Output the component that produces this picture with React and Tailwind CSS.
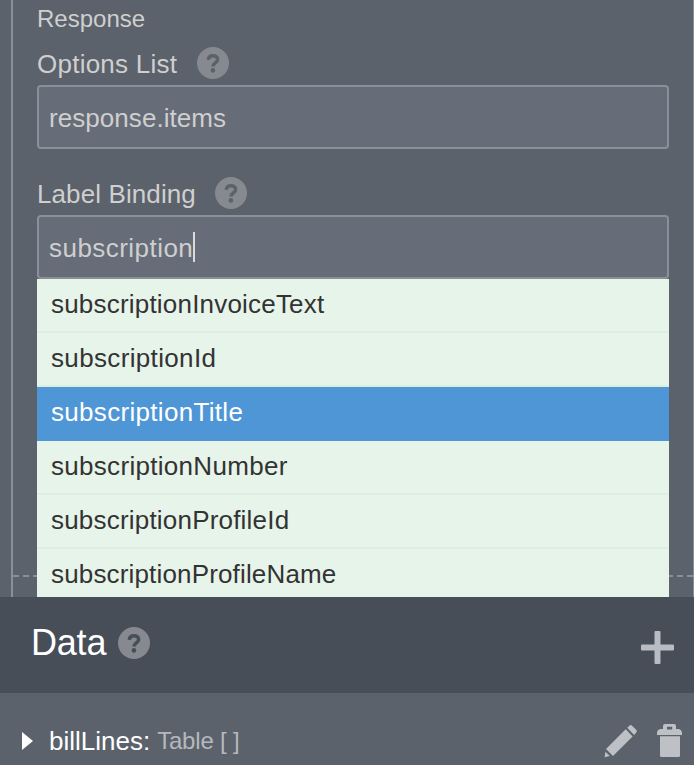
const options = [
  { name: "subscriptionInvoiceText", tracking: "tracking-[0.2px]" },
  { name: "subscriptionId", tracking: "tracking-[0.35px]" },
  { name: "subscriptionTitle", tracking: "tracking-[0.31px]", active: true },
  { name: "subscriptionNumber", tracking: "tracking-[0.3px]" },
  { name: "subscriptionProfileId", tracking: "tracking-[0.2px]" },
  { name: "subscriptionProfileName", tracking: "tracking-[0.16px]" },
];

function HelpIcon({ hole, className = "" }) {
  return (
    <svg className={`size-8 shrink-0 ${className}`} viewBox="0 0 32 32" fill="none">
      <circle cx="16" cy="16" r="16" fill="#868a90" />
      <path
        d="M11.300 12.900C11.500 10.100 13.400 8.700 15.900 8.700c2.700 0 4.700 1.400 4.700 3.700 0 3.600-4.600 3.400-4.600 7.200"
        stroke={hole}
        strokeWidth="3.500"
      />
      <circle cx="15.900" cy="23.400" r="2.300" fill={hole} />
    </svg>
  );
}

function Field({ label, value, tracking, valueTracking, gap, focused }) {
  return (
    <div>
      <div className={`flex h-8 items-center ${gap}`}>
        <span className={`pt-[2px] ${tracking}`}>{label}</span>
        <HelpIcon hole="#5b626c" />
      </div>
      <div className="mt-[6px] flex h-16 items-center rounded-[4px] border-2 border-[#8a909a] bg-[#666c78] pl-[10px]">
        <span className={`pt-[2px] ${valueTracking}`}>{value}</span>
        {focused && <span className="h-[30px] w-[2px] bg-[#dadada]" />}
      </div>
    </div>
  );
}

export default function App() {
  return (
    <div className="h-[765px] w-[694px] overflow-hidden bg-[#5b626b] font-['Liberation_Sans',Arial,sans-serif] text-[26px] leading-[30px] text-[#cfcfcf]">
      <section className="relative h-[597px] overflow-hidden pl-[11px]">
        <div className="h-full border-l-2 border-[#8a909a]">
          <div className="h-[597px] border-r border-[#8a909a] pr-6 pl-6">
            <div className="h-[47px] pt-[5px] text-[24px] leading-[28px]">Response</div>
            <Field label="Options List" value="response.items" tracking="tracking-[0.24px]" valueTracking="tracking-[0.06px]" gap="gap-[19.5px]" />
            <div className="h-7" />
            <Field label="Label Binding" value="subscription" tracking="tracking-[0.1px]" valueTracking="tracking-[0.46px]" gap="gap-[19.5px]" focused />
          </div>
        </div>
        <svg className="absolute top-[575px] left-[13px]" width="681" height="2">
          <path d="M0 1H681" stroke="#8a909a" strokeWidth="2" strokeDasharray="6 4.060" />
        </svg>
        <ul className="absolute top-[279px] left-[37px] w-[632px] text-[#333]">
          {options.map((o) => (
            <li
              key={o.name}
              className={`flex h-[54px] items-center border-b-2 pb-[2px] pl-[14px] ${o.tracking} ${
                o.active ? "border-[#4f96d6] bg-[#4f96d6] text-white" : "border-[#dcefe1] bg-[#e7f4ea]"
              }`}
            >
              {o.name}
            </li>
          ))}
        </ul>
      </section>

      <header className="flex h-24 items-center bg-[#474e58] pr-5 pl-[31px]">
        <h2 className="pb-1 text-[36px] leading-[40px] tracking-[-0.2px] text-white">Data</h2>
        <HelpIcon hole="#474e58" className="mb-1 ml-3" />
        <svg className="mt-[5px] ml-auto" width="33" height="33" viewBox="0 0 33 33" fill="#b9bcc2">
          <rect x="0" y="13.500" width="33" height="6" rx="1" />
          <rect x="13.500" y="0" width="6" height="33" rx="1" />
        </svg>
      </header>

      <div className="flex h-24 items-center">
        <svg className="ml-[22px]" width="11" height="18" viewBox="0 0 11 18">
          <path d="M0 0L11 9L0 18Z" fill="#fff" />
        </svg>
        <span className="ml-4 text-white">billLines:</span>
        <span className="ml-[7px] text-[24px] tracking-[-0.2px] text-[#b5b8be]">Table [ ]</span>
        <svg className="ml-auto" width="34" height="34" viewBox="0 0 34 34" fill="#bdc0c5">
          <path d="M21.700 5.200L28.600 12.400L9 31.900L2 25Z" />
          <path d="M23.200 3.700L25.600 1.400Q26.700.4 27.800 1.400L32.400 6Q33.400 7 32.400 8.200L30.100 10.900Z" />
          <path d="M1.500 27.800L5.800 32L.5 33.300Z" />
        </svg>
        <svg className="mr-3 ml-[19px]" width="25" height="34" viewBox="0 0 25 34" fill="#bdc0c5">
          <path fillRule="evenodd" d="M6 5V2Q6 0 8 0H17Q19 0 19 2V5H22Q25 6 25 9V11H0V9Q0 6 3 5ZM10 2.700V5.500H15.200V2.700Z" />
          <path d="M3 12.300H23V31.500Q23 33 21.500 33H4.500Q3 33 3 31.500Z" />
        </svg>
      </div>
    </div>
  );
}
